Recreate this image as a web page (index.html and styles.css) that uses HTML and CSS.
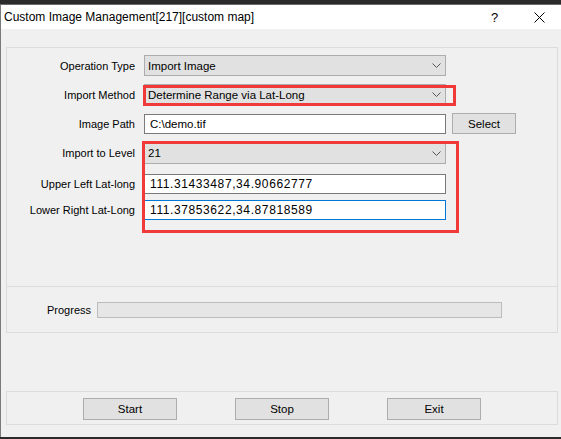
FILE: index.html
```html
<!DOCTYPE html>
<html lang="en">
<head>
<meta charset="utf-8">
<title>Custom Image Management</title>
<link rel="stylesheet" href="styles.css">
</head>
<body>
<div class="window">
  <div class="titlebar">
    <span class="title">Custom Image Management[217][custom map]</span>
    <span class="help">?</span>
    <span class="close">
      <svg width="11" height="11" viewBox="0 0 11 11"><path d="M0.5 0.5 L10.5 10.5 M10.5 0.5 L0.5 10.5" stroke="#000" stroke-width="1" fill="none"/></svg>
    </span>
  </div>
  <div class="client">
    <div class="group params">
      <div class="row r1">
        <label class="label">Operation Type</label>
        <div class="combo"><span>Import Image</span><svg class="chev" width="9" height="5" viewBox="0 0 9 5"><polyline points="0.5,0.5 4.5,4.5 8.5,0.5" fill="none" stroke="#555" stroke-width="1"/></svg></div>
      </div>
      <div class="row r2">
        <label class="label">Import Method</label>
        <div class="combo"><span>Determine Range via Lat-Long</span><svg class="chev" width="9" height="5" viewBox="0 0 9 5"><polyline points="0.5,0.5 4.5,4.5 8.5,0.5" fill="none" stroke="#555" stroke-width="1"/></svg></div>
      </div>
      <div class="row r3">
        <label class="label">Image Path</label>
        <div class="field">C:\demo.tif</div>
        <button class="btn select">Select</button>
      </div>
      <div class="row r4">
        <label class="label">Import to Level</label>
        <div class="combo tall"><span>21</span><svg class="chev" width="9" height="5" viewBox="0 0 9 5"><polyline points="0.5,0.5 4.5,4.5 8.5,0.5" fill="none" stroke="#555" stroke-width="1"/></svg></div>
      </div>
      <div class="row r5">
        <label class="label">Upper Left Lat-long</label>
        <div class="field num">111.31433487,34.90662777</div>
      </div>
      <div class="row r6">
        <label class="label">Lower Right Lat-Long</label>
        <div class="field num focused">111.37853622,34.87818589</div>
      </div>
      <div class="mark mark-method"></div>
      <div class="mark mark-range"></div>
    </div>
    <div class="group progress">
      <span class="plabel">Progress</span>
      <div class="pbar"></div>
    </div>
    <div class="group actions">
      <button class="btn action">Start</button>
      <button class="btn action">Stop</button>
      <button class="btn action">Exit</button>
    </div>
  </div>
</div>
</body>
</html>
```

FILE: styles.css
```css
html, body {
  margin: 0;
  padding: 0;
}

body {
  width: 561px;
  height: 439px;
  overflow: hidden;
  background: #2b2b2b;
  font-family: "Liberation Sans", Arial, sans-serif;
  font-size: 11px;
  color: #000;
}

.window {
  margin-top: 4px;
  width: 561px;
  height: 433px;
  box-sizing: border-box;
  border-top: 1px solid #6a6a6a;
  border-left: 1px solid #7a7a7a;
  display: flex;
  flex-direction: column;
}

/* title bar */
.titlebar {
  height: 24px;
  flex: none;
  background: #fff;
  display: flex;
  align-items: center;
  padding-left: 3px;
}

.title {
  font-size: 12px;
  white-space: nowrap;
}

.help {
  margin-left: auto;
  font-size: 13px;
  width: 8px;
}

.close {
  display: flex;
  margin-left: 35px;
  margin-right: 16px;
}

/* dialog body */
.client {
  flex: 1;
  background: #f0f0f0;
  padding-left: 5px;
}

.group {
  width: 552px;
  box-sizing: border-box;
  border: 1px solid #dcdcdc;
}

.params {
  position: relative;
  margin-top: 18px;
  height: 240px;
  padding-top: 7px;
}

.row {
  display: flex;
  align-items: center;
}

.r1 { height: 21px; }
.r2 { height: 21px; margin-top: 8px; }
.r3 { height: 21px; margin-top: 8px; }
.r4 { height: 22px; margin-top: 8px; }
.r5 { height: 20px; margin-top: 10px; }
.r6 { height: 20px; margin-top: 6px; }

.label {
  width: 128px;
  margin-right: 9px;
  text-align: right;
  white-space: nowrap;
}

.combo {
  width: 302px;
  height: 21px;
  box-sizing: border-box;
  border: 1px solid #adadad;
  background: #e1e1e1;
  display: flex;
  align-items: center;
  justify-content: space-between;
  padding: 0 4px 0 3px;
  font-size: 11.5px;
}

.combo.tall {
  height: 22px;
}

.chev {
  display: block;
}

.field {
  width: 302px;
  height: 20px;
  box-sizing: border-box;
  border: 1px solid #7a7a7a;
  background: #fff;
  padding-left: 5px;
  display: flex;
  align-items: center;
  font-size: 11.5px;
}

.field.num {
  font-size: 12px;
  letter-spacing: 0.6px;
}

.field.focused {
  border-color: #0078d7;
}

.btn {
  font-family: inherit;
  font-size: 11.5px;
  color: #000;
  background: #e1e1e1;
  border: 1px solid #adadad;
  box-sizing: border-box;
  padding: 0;
}

.select {
  margin-left: 6px;
  width: 64px;
  height: 21px;
}

/* red annotation frames */
.mark {
  position: absolute;
  box-sizing: border-box;
  border: 3px solid #f03a3a;
}

.mark-method {
  left: 136px;
  top: 37px;
  width: 313px;
  height: 21px;
}

.mark-range {
  left: 135px;
  top: 93px;
  width: 317px;
  height: 92px;
}

/* progress */
.progress {
  border-top: none;
  height: 46px;
  display: flex;
  align-items: center;
  padding: 0 0 0 40px;
}

.plabel {
  width: 50px;
}

.pbar {
  width: 405px;
  height: 16px;
  box-sizing: border-box;
  background: #e6e6e6;
  border: 1px solid #bcbcbc;
}

/* bottom buttons */
.actions {
  margin-top: 58px;
  height: 34px;
  display: flex;
  align-items: flex-start;
  padding: 6px 0 0 76px;
  gap: 58px;
}

.action {
  width: 94px;
  height: 22px;
}
```
